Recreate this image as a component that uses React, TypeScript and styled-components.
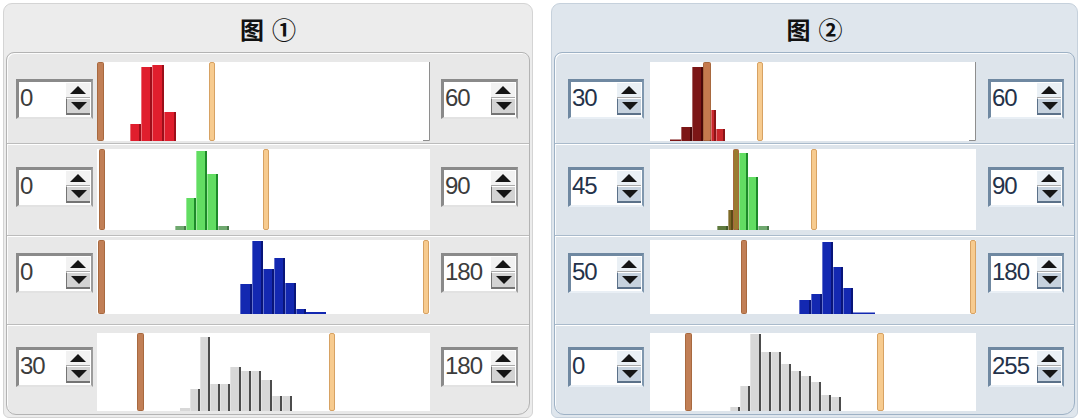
import React from 'react';
import styled, { createGlobalStyle, css } from 'styled-components';

const Global = createGlobalStyle`
  html, body { margin: 0; padding: 0; background: #ffffff; }
  body { font-family: "Liberation Sans", Arial, sans-serif; }
`;

type ToneKey = 'gray' | 'blue';

const tones = {
  gray: {
    panelBg: '#ececec',
    panelBorder: '#d4d4d4',
    rowsBg: '#e8e8e8',
    frame: '#b3b3b3',
    sep: '#bcbcbc',
    spinDark: '#8a8a8a',
    spinLight: '#e2e2e2',
    spinRight: '#9c9c9c',
    text: '#3c3c3c',
    btnTop: '#f2f2f2',
    btnBottom: '#d3d3d3',
    btnEdge: '#747474',
  },
  blue: {
    panelBg: '#dfe6ed',
    panelBorder: '#c6d1dc',
    rowsBg: '#dde4eb',
    frame: '#9db1c5',
    sep: '#a9bacb',
    spinDark: '#6f88a1',
    spinLight: '#e9eff5',
    spinRight: '#7f97ae',
    text: '#24324a',
    btnTop: '#eaf0f5',
    btnBottom: '#c6d2de',
    btnEdge: '#5b7189',
  },
};

const seriesColors: Record<string, { fill: string; edge: string }> = {
  red: { fill: '#e01e2d', edge: '#9c0e19' },
  darkred: { fill: '#7c1616', edge: '#4c0909' },
  redR: { fill: '#c9272b', edge: '#8a1417' },
  green: { fill: '#62dd62', edge: '#1d8a29' },
  greenDim: { fill: '#6fa86f', edge: '#4a7a4a' },
  olive: { fill: '#7e6a27', edge: '#5a4a17' },
  oliveDim: { fill: '#5f7a3e', edge: '#44592b' },
  blue: { fill: '#1328b1', edge: '#08157a' },
  gray: { fill: '#d8d8d8', edge: '#4c4c4c' },
};

type Bar = [number, number, number, string];
type Marker = { x: number; w: number; color?: string };

type RowData = {
  lo: number;
  hi: number;
  height: number;
  plotTop: number;
  plotH: number;
  spinTop: number;
  low: Marker;
  high: Marker;
  bars: Bar[];
  corner?: boolean;
};

type PanelLayout = { padL: number; spinW: number; g1: number; plotW: number; g2: number; width: number };

const rowShape = [
  { height: 90, plotTop: 9, plotH: 79, spinTop: 26 },
  { height: 92, plotTop: 5, plotH: 81, spinTop: 23 },
  { height: 89, plotTop: 4, plotH: 74, spinTop: 17 },
  { height: 90, plotTop: 8, plotH: 78, spinTop: 22 },
];

const mk = (
  i: number,
  lo: number,
  hi: number,
  low: Marker,
  high: Marker,
  bars: Bar[],
  corner = false,
): RowData => ({ ...rowShape[i], lo, hi, low, high, bars, corner });

const leftRows: RowData[] = [
  mk(0, 0, 60, { x: 0, w: 7 }, { x: 112, w: 6 }, [
    [33, 11, 17, 'red'],
    [44, 11, 74, 'red'],
    [55, 12, 76, 'red'],
    [67, 12, 29, 'red'],
  ], true),
  mk(1, 0, 90, { x: 2, w: 6 }, { x: 166, w: 6 }, [
    [78, 11, 4, 'greenDim'],
    [89, 10, 32, 'green'],
    [99, 11, 79, 'green'],
    [110, 11, 56, 'green'],
    [121, 11, 4, 'greenDim'],
  ]),
  mk(2, 0, 180, { x: 1, w: 7 }, { x: 326, w: 6 }, [
    [143, 12, 30, 'blue'],
    [155, 11, 73, 'blue'],
    [166, 11, 45, 'blue'],
    [177, 11, 56, 'blue'],
    [188, 11, 31, 'blue'],
    [199, 10, 5, 'blue'],
    [209, 20, 2, 'blue'],
  ]),
  mk(3, 30, 180, { x: 40, w: 7 }, { x: 232, w: 6 }, [
    [83, 10, 3, 'gray'],
    [93, 10, 22, 'gray'],
    [103, 10, 74, 'gray'],
    [113, 10, 27, 'gray'],
    [123, 10, 27, 'gray'],
    [133, 11, 44, 'gray'],
    [144, 10, 40, 'gray'],
    [154, 10, 40, 'gray'],
    [164, 11, 31, 'gray'],
    [175, 10, 15, 'gray'],
    [185, 10, 15, 'gray'],
  ]),
];

const rightRows: RowData[] = [
  mk(0, 30, 60, { x: 53, w: 8, color: '#c57a4e' }, { x: 107, w: 6 }, [
    [20, 11, 1.5, 'darkred'],
    [31, 11, 14, 'darkred'],
    [42, 11, 74, 'darkred'],
    [53, 8, 76, 'darkred'],
    [61, 5, 31, 'redR'],
    [66, 9, 12, 'redR'],
  ], true),
  mk(1, 45, 90, { x: 83, w: 6, color: '#9a7b30' }, { x: 161, w: 6 }, [
    [67, 11, 4, 'oliveDim'],
    [78, 5, 20, 'olive'],
    [83, 6, 77, 'olive'],
    [89, 9, 77, 'green'],
    [98, 10, 53, 'green'],
    [108, 11, 4, 'greenDim'],
  ]),
  mk(2, 50, 180, { x: 91, w: 6 }, { x: 320, w: 6 }, [
    [149, 12, 14, 'blue'],
    [161, 11, 20, 'blue'],
    [172, 11, 72, 'blue'],
    [183, 10, 47, 'blue'],
    [193, 10, 26, 'blue'],
    [203, 22, 1.5, 'blue'],
  ]),
  mk(3, 0, 255, { x: 35, w: 7 }, { x: 227, w: 7 }, [
    [80, 10, 4, 'gray'],
    [90, 10, 25, 'gray'],
    [100, 11, 77, 'gray'],
    [111, 10, 59, 'gray'],
    [121, 10, 59, 'gray'],
    [131, 10, 47, 'gray'],
    [141, 10, 40, 'gray'],
    [151, 10, 35, 'gray'],
    [161, 10, 29, 'gray'],
    [171, 10, 16, 'gray'],
    [181, 10, 14, 'gray'],
  ]),
];

const leftLayout: PanelLayout = { padL: 9, spinW: 77, g1: 4, plotW: 333, g2: 11, width: 530 };
const rightLayout: PanelLayout = { padL: 13, spinW: 76, g1: 6, plotW: 326, g2: 12, width: 527 };

/* ---------- styled parts ---------- */

const Page = styled.div`
  display: flex;
  gap: 18px;
  padding: 3px 0 0 3px;
`;

const Panel = styled.section<{ $tone: ToneKey; $w: number }>`
  width: ${(p) => p.$w}px;
  box-sizing: border-box;
  background: ${(p) => tones[p.$tone].panelBg};
  border: 1px solid ${(p) => tones[p.$tone].panelBorder};
  border-radius: 9px 9px 6px 6px;
  display: flex;
  flex-direction: column;
  padding: 0 2px 2px 2px;
`;

const Title = styled.h2`
  margin: 0;
  height: 48px;
  display: flex;
  align-items: center;
  justify-content: center;
  gap: 8px;
  font-family: "Noto Sans CJK SC", "Noto Sans", sans-serif;
  font-weight: 700;
  font-size: 24px;
  color: #111111;
`;

const Frame = styled.div<{ $tone: ToneKey }>`
  display: flex;
  flex-direction: column;
  background: ${(p) => tones[p.$tone].rowsBg};
  border: 1px solid ${(p) => tones[p.$tone].frame};
  border-radius: 8px 8px 12px 10px;
  box-shadow: inset 1px 1px 0 rgba(255, 255, 255, 0.85);
  overflow: hidden;
`;

const Row = styled.div<{ $tone: ToneKey; $h: number; $padL: number; $first: boolean }>`
  box-sizing: border-box;
  height: ${(p) => p.$h}px;
  display: flex;
  align-items: flex-start;
  padding-left: ${(p) => p.$padL}px;
  ${(p) =>
    !p.$first &&
    css`
      border-top: 1px solid ${tones[p.$tone].sep};
      box-shadow: inset 0 1px 0 #ffffff;
    `}
`;

const SpinBox = styled.div<{ $tone: ToneKey; $w: number; $top: number }>`
  box-sizing: border-box;
  width: ${(p) => p.$w}px;
  height: 40px;
  margin-top: ${(p) => p.$top}px;
  flex: none;
  display: flex;
  align-items: flex-start;
  justify-content: space-between;
  background: #ffffff;
  border-top: 3px solid ${(p) => tones[p.$tone].spinDark};
  border-left: 3px solid ${(p) => tones[p.$tone].spinDark};
  border-right: 2px solid ${(p) => tones[p.$tone].spinRight};
  border-bottom: 2px solid ${(p) => tones[p.$tone].spinLight};
`;

const SpinValue = styled.span<{ $tone: ToneKey }>`
  font-family: "Liberation Sans", Arial, sans-serif;
  font-size: 24px;
  line-height: 32px;
  padding-left: 1px;
  letter-spacing: -1px;
  color: ${(p) => tones[p.$tone].text};
`;

const SpinButtons = styled.div`
  width: 24px;
  margin: 1px 1px 0 0;
  display: flex;
  flex-direction: column;
`;

const SpinHalf = styled.div<{ $tone: ToneKey; $down?: boolean }>`
  height: 14px;
  display: flex;
  align-items: center;
  justify-content: center;
  background: ${(p) => (p.$down ? tones[p.$tone].btnBottom : tones[p.$tone].btnTop)};
  ${(p) =>
    p.$down
      ? css`
          border-bottom: 2px solid ${tones[p.$tone].btnEdge};
          border-left: 1px solid ${tones[p.$tone].btnEdge};
          border-top: 1px solid #ffffff;
        `
      : css`
          border-bottom: 1px solid #a9a9a9;
        `}
`;

const Arrow = styled.span<{ $down?: boolean }>`
  width: 0;
  height: 0;
  border-left: 8px solid transparent;
  border-right: 8px solid transparent;
  ${(p) =>
    p.$down
      ? css`border-top: 8px solid #151515;`
      : css`border-bottom: 8px solid #151515;`}
`;

const Plot = styled.svg<{ $top: number; $g1: number; $g2: number }>`
  display: block;
  flex: none;
  margin: ${(p) => p.$top}px ${(p) => p.$g2}px 0 ${(p) => p.$g1}px;
  background: #ffffff;
`;

/* ---------- components ---------- */

function Spin({ tone, w, top, value }: { tone: ToneKey; w: number; top: number; value: number }) {
  return (
    <SpinBox $tone={tone} $w={w} $top={top}>
      <SpinValue $tone={tone}>{value}</SpinValue>
      <SpinButtons>
        <SpinHalf $tone={tone}>
          <Arrow />
        </SpinHalf>
        <SpinHalf $tone={tone} $down>
          <Arrow $down />
        </SpinHalf>
      </SpinButtons>
    </SpinBox>
  );
}

function Histogram({ row, w, top, g1, g2 }: { row: RowData; w: number; top: number; g1: number; g2: number }) {
  const h = row.plotH;
  return (
    <Plot width={w} height={h} viewBox={`0 0 ${w} ${h}`} $top={top} $g1={g1} $g2={g2}>
      {row.bars.map(([x, bw, bh, key], i) => {
        const c = seriesColors[key];
        return (
          <g key={i}>
            <rect x={x} y={h - bh} width={bw} height={bh} fill={c.fill} />
            {bh > 3 && <rect x={x + bw - 2} y={h - bh} width={2} height={bh} fill={c.edge} />}
            {bh > 3 && <rect x={x} y={h - bh} width={1} height={bh} fill="rgba(255,255,255,0.35)" />}
          </g>
        );
      })}
      <rect
        x={row.low.x + 0.5}
        y={0.5}
        width={row.low.w - 1}
        height={h - 1}
        rx={1}
        fill={row.low.color ?? '#c17f56'}
        stroke="#a8693f"
        strokeWidth={1}
      />
      <rect
        x={row.high.x + 0.5}
        y={0.5}
        width={row.high.w - 1}
        height={h - 1}
        rx={1.5}
        fill="#f7cb8f"
        stroke="#d7a263"
        strokeWidth={1}
      />
      {row.corner && (
        <path d={`M${w - 0.5} 0 V${h - 0.5} H${w - 7}`} stroke="#8e8e8e" strokeWidth={1} fill="none" />
      )}
    </Plot>
  );
}

function HistPanel({
  tone,
  title,
  layout,
  rows,
}: {
  tone: ToneKey;
  title: string;
  layout: PanelLayout;
  rows: RowData[];
}) {
  return (
    <Panel $tone={tone} $w={layout.width}>
      <Title>
        <span>图</span>
        <span>{title}</span>
      </Title>
      <Frame $tone={tone}>
        {rows.map((r, i) => (
          <Row key={i} $tone={tone} $h={r.height} $padL={layout.padL} $first={i === 0}>
            <Spin tone={tone} w={layout.spinW} top={r.spinTop} value={r.lo} />
            <Histogram row={r} w={layout.plotW} top={r.plotTop} g1={layout.g1} g2={layout.g2} />
            <Spin tone={tone} w={layout.spinW} top={r.spinTop} value={r.hi} />
          </Row>
        ))}
      </Frame>
    </Panel>
  );
}

export default function App() {
  return (
    <>
      <Global />
      <Page>
        <HistPanel tone="gray" title="①" layout={leftLayout} rows={leftRows} />
        <HistPanel tone="blue" title="②" layout={rightLayout} rows={rightRows} />
      </Page>
    </>
  );
}
